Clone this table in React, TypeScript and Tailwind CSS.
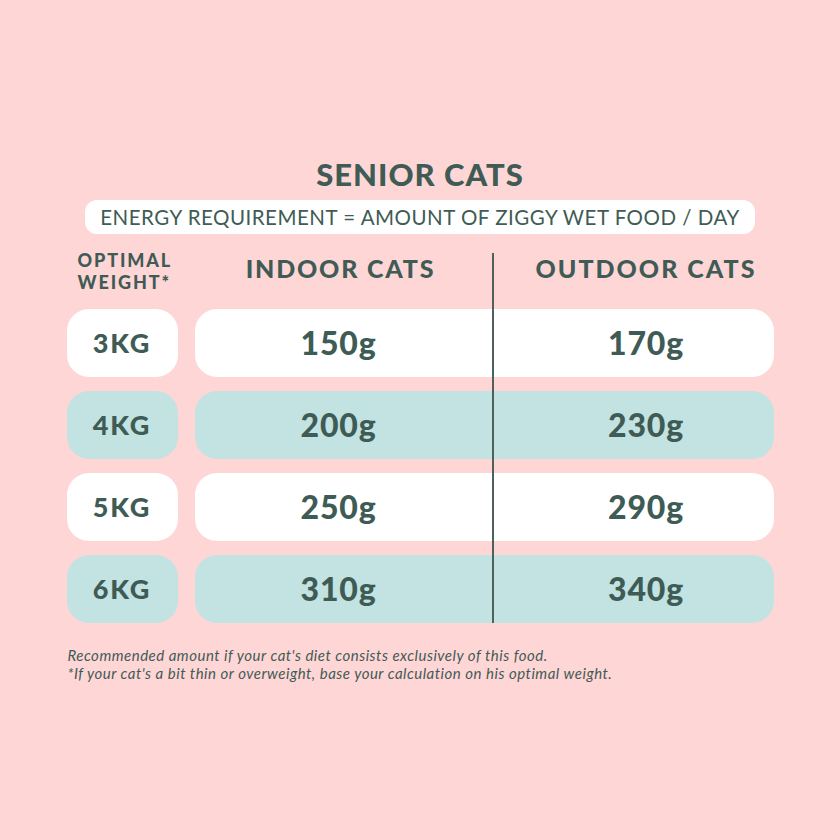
const rows = [
  { kg: "3KG", indoor: "150g", outdoor: "170g", teal: false },
  { kg: "4KG", indoor: "200g", outdoor: "230g", teal: true },
  { kg: "5KG", indoor: "250g", outdoor: "290g", teal: false },
  { kg: "6KG", indoor: "310g", outdoor: "340g", teal: true },
];

export default function App() {
  return (
    <div className="w-[840px] h-[840px] bg-[#ffd6d6] text-[#3f5b55] font-['Lato',sans-serif] flex flex-col items-center pt-[154px]">
      <h1 className="text-[31px] leading-[40px] font-black tracking-[1px]">SENIOR CATS</h1>
      <div className="mt-[6px] bg-white rounded-[12px] h-[34px] px-[15px] flex items-center text-[20.5px] tracking-[0.5px]">
        ENERGY REQUIREMENT = AMOUNT OF ZIGGY WET FOOD / DAY
      </div>

      <div className="relative w-[707px] mt-[19px]">
        <div className="absolute left-[425px] top-0 h-[370px] w-[2px] bg-[#4f615c]" />

        <div className="flex items-start h-[40px]">
          <div className="w-[128px] pl-[11px] mt-[-4px] text-[18px] leading-[22px] font-black tracking-[1.9px]">
            OPTIMAL
            <br />
            WEIGHT*
          </div>
          <div className="w-[298px] text-center text-[25px] leading-[30px] font-black tracking-[1.8px] pr-[6px]">INDOOR CATS</div>
          <div className="w-[281px] text-center text-[25px] leading-[30px] font-black tracking-[2px] pl-[26px]">OUTDOOR CATS</div>
        </div>

        <div className="mt-[16px] flex flex-col gap-[14px]">
          {rows.map((r) => (
            <div key={r.kg} className="flex gap-[17px] h-[68px]">
              <div
                className={`w-[111px] rounded-[22px] flex items-center justify-center text-[27px] font-black tracking-[1.8px] ${
                  r.teal ? "bg-[#c2e3e1]" : "bg-white"
                }`}
              >
                {r.kg}
              </div>
              <div className={`flex-1 rounded-[22px] flex items-center text-[32px] font-black tracking-[0.8px] ${r.teal ? "bg-[#c2e3e1]" : "bg-white"}`}>
                <div className="w-[298px] text-center pr-[10px]">{r.indoor}</div>
                <div className="w-[281px] text-center pl-[26px]">{r.outdoor}</div>
              </div>
            </div>
          ))}
        </div>
      </div>

      <div className="w-[707px] mt-[23px] pl-[1px] text-[15px] leading-[18px] tracking-[0.5px] italic">
        <p>Recommended amount if your cat's diet consists exclusively of this food.</p>
        <p>*If your cat's a bit thin or overweight, base your calculation on his optimal weight.</p>
      </div>
    </div>
  );
}
